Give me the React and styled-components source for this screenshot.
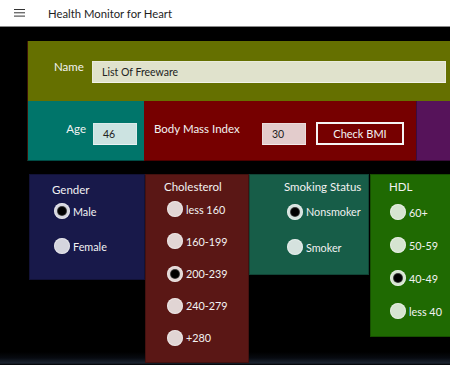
import React from 'react';
import styled, { createGlobalStyle } from 'styled-components';

const GlobalStyle = createGlobalStyle`
  html, body {
    margin: 0;
    padding: 0;
    height: 365px;
    overflow: hidden;
    background: linear-gradient(to bottom, #000 0, #000 352px, #070a10 358px, #1c2431 363px, #000 365px);
    font-family: Lato, 'Noto Sans', sans-serif;
  }
`;

const TitleBar = styled.div`
  display: flex;
  align-items: center;
  height: 26px;
  background: #fff;
  border-bottom: 1px solid #8a8a8a;
`;

const Burger = styled.div`
  width: 48px;
  display: flex;
  justify-content: flex-start;
  padding-left: 14px;
  box-sizing: border-box;
`;

const Title = styled.span`
  font-size: 11.3px;
  color: #1e1e1e;
`;

const Main = styled.div`
  padding: 14px 0 0 27px;
  display: flex;
  flex-direction: column;
`;

const NamePanel = styled.div`
  height: 60px;
  background: #657000;
  display: flex;
  align-items: flex-start;
  padding: 19px 4px 0 26px;
  box-sizing: border-box;
  border-left: 1px solid #3a1208;
`;

const Row = styled.div`
  display: flex;
  height: 60px;
`;

const Tile = styled.div`
  width: ${p => p.w}px;
  flex: ${p => (p.w ? 'none' : 1)};
  background: ${p => p.bg};
  display: flex;
  align-items: flex-start;
  padding: 21px 0 0 ${p => p.pl || 0}px;
  box-sizing: border-box;
  border-left: 1px solid ${p => p.line || 'transparent'};
  border-bottom: 1px solid rgba(0, 0, 0, 0.35);
`;

const Label = styled.span`
  color: #f2f2f2;
  font-size: 11.5px;
  line-height: 16px;
  white-space: nowrap;
  margin-top: ${p => p.mt || 0}px;
  margin-right: ${p => p.mr || 0}px;
  width: ${p => (p.w ? `${p.w}px` : 'auto')};
  text-align: ${p => p.align || 'left'};
  flex: none;
`;

const Input = styled.div`
  width: ${p => (p.w ? `${p.w}px` : 'auto')};
  flex: ${p => (p.w ? 'none' : 1)};
  height: 22px;
  box-sizing: border-box;
  background: rgba(255, 255, 255, 0.8);
  border: 1px solid rgba(255, 255, 255, 0.3);
  border-bottom-color: rgba(255, 255, 255, 0.6);
  color: #222;
  font-size: 10.5px;
  line-height: 20px;
  padding-left: 9px;
  margin-top: 1px;
`;

const Button = styled.div`
  width: 88px;
  height: 23px;
  box-sizing: border-box;
  border: 2px solid #f4f4f4;
  color: #f4f4f4;
  font-size: 11px;
  display: flex;
  align-items: center;
  justify-content: center;
  margin-left: 10px;
`;

const Groups = styled.div`
  display: flex;
  align-items: flex-start;
  margin-top: 13px;
  margin-left: 2px;
`;

const Group = styled.div`
  width: ${p => p.w}px;
  height: ${p => p.h}px;
  flex: none;
  background: ${p => p.bg};
  box-sizing: border-box;
  padding: ${p => p.pt || 4}px 0 0 ${p => p.pl}px;
  margin-right: ${p => p.mr || 0}px;
  display: flex;
  flex-direction: column;
  border: 1px solid rgba(0, 0, 0, 0.25);
`;

const GroupTitle = styled.span`
  color: #f2f2f2;
  font-size: 11.5px;
  line-height: 16px;
  white-space: nowrap;
  margin-left: ${p => p.ml || 0}px;
  margin-bottom: ${p => p.mb}px;
`;

const Option = styled.div`
  display: flex;
  align-items: center;
  height: 18px;
  margin-bottom: ${p => p.gap}px;
`;

const Radio = styled.div`
  width: 16px;
  height: 16px;
  border-radius: 50%;
  background: rgba(255, 255, 255, 0.82);
  display: flex;
  align-items: center;
  justify-content: center;
  margin-right: 3px;
  flex: none;
  box-shadow: inset 0 0 0 1px rgba(255, 255, 255, 0.4);
`;

const Dot = styled.div`
  width: 8px;
  height: 8px;
  border-radius: 50%;
  background: #000;
  box-shadow: 0 0 0 1px #3a3a3a;
`;

const OptionText = styled.span`
  color: #f2f2f2;
  font-size: 10.8px;
  white-space: nowrap;
`;

const RadioGroup = ({ title, options, checked, gap, titleMb, titleMl, ...rest }) => (
  <Group {...rest}>
    <GroupTitle mb={titleMb} ml={titleMl}>{title}</GroupTitle>
    {options.map(o => (
      <Option key={o} gap={gap}>
        <Radio>{o === checked && <Dot />}</Radio>
        <OptionText>{o}</OptionText>
      </Option>
    ))}
  </Group>
);

export default function App() {
  return (
    <>
      <GlobalStyle />
      <TitleBar>
        <Burger>
          <svg width="11" height="8" viewBox="0 0 11 8">
            <path d="M0 0.5h11M0 3.8h11M0 7.1h11" stroke="#333" strokeWidth="1" />
          </svg>
        </Burger>
        <Title>Health Monitor for Heart</Title>
      </TitleBar>
      <Main>
        <NamePanel>
          <Label w={38} mt={-1}>Name</Label>
          <Input>List Of Freeware</Input>
        </NamePanel>
        <Row>
          <Tile w={117} bg="#00756a" line="#3a1208">
            <Label w={58} align="right" mr={7} mt={-1}>Age</Label>
            <Input w={44}>46</Input>
          </Tile>
          <Tile w={272} bg="#760000" pl={9}>
            <Label w={108} mt={-1}>Body Mass Index</Label>
            <Input w={44}>30</Input>
            <Button>Check BMI</Button>
          </Tile>
          <Tile bg="#56135a" line="#3b0c3e" />
        </Row>
        <Groups>
          <RadioGroup
            w={116}
            h={106}
            bg="#18194a"
            pt={7}
            pl={24}
            titleMl={-2}
            titleMb={4}
            gap={17}
            title="Gender"
            options={['Male', 'Female']}
            checked="Male"
          />
          <RadioGroup
            w={104}
            h={189}
            bg="#5a1715"
            pl={21}
            titleMl={-3}
            titleMb={6}
            gap={16}
            title="Cholesterol"
            options={['less 160', '160-199', '200-239', '240-279', '+280']}
            checked="200-239"
          />
          <RadioGroup
            w={120}
            h={101}
            mr={1}
            bg="#175d48"
            pl={37}
            titleMl={-3}
            titleMb={8}
            gap={18}
            title="Smoking Status"
            options={['Nonsmoker', 'Smoker']}
            checked="Nonsmoker"
          />
          <RadioGroup
            w={82}
            h={163}
            bg="#1f6a02"
            pl={19}
            titleMl={-1}
            titleMb={8}
            gap={15}
            title="HDL"
            options={['60+', '50-59', '40-49', 'less 40']}
            checked="40-49"
          />
        </Groups>
      </Main>
    </>
  );
}
